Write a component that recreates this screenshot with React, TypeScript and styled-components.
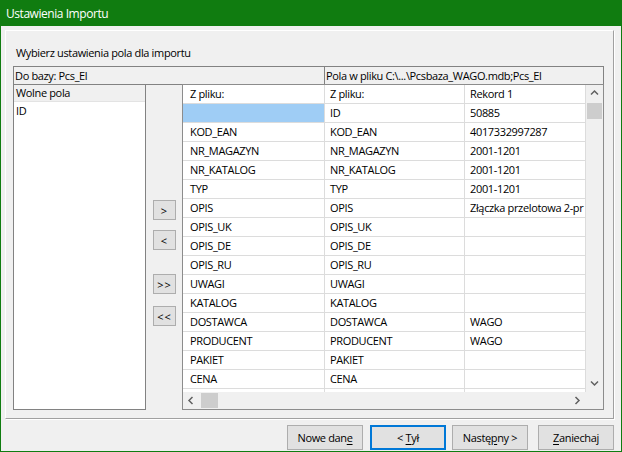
import React from 'react';
import styled, { createGlobalStyle } from 'styled-components';

const GlobalStyle = createGlobalStyle`
  html, body {
    margin: 0;
    padding: 0;
    background: #ffffff;
  }
`;

const Window = styled.div`
  width: 622px;
  height: 452px;
  box-sizing: border-box;
  background: #107c10;
  display: flex;
  flex-direction: column;
  font-family: 'Open Sans', 'Noto Sans', sans-serif;
  font-size: 11px;
  letter-spacing: -0.35px;
  color: #000;
`;

const TitleBar = styled.div`
  height: 26px;
  flex: none;
  display: flex;
  align-items: center;
  padding-left: 6px;
  color: #fff;
  font-size: 12px;
  letter-spacing: -0.45px;
`;

const Body = styled.div`
  flex: 1;
  margin: 0 1px 1px;
  background: #f0f0f0;
  display: flex;
  flex-direction: column;
`;

const Panel = styled.div`
  margin: 4px 0 0 4px;
  width: 609px;
  height: 389px;
  box-sizing: border-box;
  border: 1px solid;
  border-color: #ffffff #a0a0a0 #a0a0a0 #ffffff;
  box-shadow: 1px 1px 0 #ffffff;
  display: flex;
  flex-direction: column;
`;

const Caption = styled.div`
  margin-top: 14px;
  padding-left: 10px;
  line-height: 15px;
`;

const Frame = styled.div`
  flex: 1;
  margin: 6px 9px 8px 7px;
  display: flex;
  flex-direction: column;
`;

const HeaderBox = styled.div`
  height: 18px;
  box-sizing: border-box;
  border: 1px solid #828282;
  border-bottom: none;
  display: flex;
`;

const HeaderCell = styled.div<{ $width?: number }>`
  ${(p) => (p.$width ? `width: ${p.$width}px; border-right: 1px solid #828282;` : 'flex: 1;')}
  box-sizing: border-box;
  padding-left: 1px;
  line-height: 17px;
  white-space: nowrap;
  overflow: hidden;
`;

const LowerRow = styled.div`
  flex: 1;
  display: flex;
`;

const ListBox = styled.div`
  width: 133px;
  box-sizing: border-box;
  border: 1px solid #828282;
  background: #fff;
`;

const ListHeader = styled.div`
  height: 17px;
  box-sizing: border-box;
  background: #f0f0f0;
  border-bottom: 1px solid #e3e3e3;
  padding-left: 2px;
  line-height: 16px;
`;

const ListItem = styled.div`
  height: 17px;
  padding-left: 2px;
  line-height: 17px;
`;

const Strip = styled.div`
  width: 36px;
  box-sizing: border-box;
  border-top: 1px solid #828282;
  display: flex;
  flex-direction: column;
  padding: 115px 0 0 7px;
`;

const MoveButton = styled.div<{ $gap: number }>`
  width: 23px;
  height: 20px;
  box-sizing: border-box;
  margin-top: ${(p) => p.$gap}px;
  background: #e1e1e1;
  border: 1px solid #adadad;
  display: flex;
  align-items: center;
  justify-content: center;
  letter-spacing: 1px;
  font-size: 11px;
`;

const GridBox = styled.div`
  flex: 1;
  box-sizing: border-box;
  border: 1px solid #8c8c8c;
  background: #fff;
  display: flex;
  flex-direction: column;
  overflow: hidden;
`;

const GridTop = styled.div`
  height: 307px;
  display: flex;
`;

const Table = styled.div`
  width: 403px;
  overflow: hidden;
`;

const Row = styled.div`
  display: grid;
  grid-template-columns: 142px 140px 121px;
  height: 19px;
`;

const Cell = styled.div<{ $pad: number; $selected?: boolean }>`
  box-sizing: border-box;
  border-right: 1px solid #dcdcdc;
  border-bottom: 1px solid #dcdcdc;
  padding-left: ${(p) => p.$pad}px;
  line-height: 18px;
  white-space: nowrap;
  overflow: hidden;
  background: ${(p) => (p.$selected ? '#9fcdf5' : '#ffffff')};
`;

const VScroll = styled.div`
  width: 17px;
  background: #f0f0f0;
  display: flex;
  flex-direction: column;
`;

const ArrowBtn = styled.div<{ $end?: boolean }>`
  width: 17px;
  height: 17px;
  flex: none;
  display: flex;
  align-items: center;
  justify-content: center;
  ${(p) => (p.$end ? 'margin-top: auto;' : '')}
`;

const VThumb = styled.div`
  height: 16px;
  margin: 1px 1px 0;
  background: #cdcdcd;
`;

const HScrollRow = styled.div`
  height: 17px;
  display: flex;
  background: #f0f0f0;
`;

const HScroll = styled.div`
  width: 403px;
  display: flex;
`;

const HThumb = styled.div`
  width: 17px;
  height: 15px;
  margin: 1px 0 0 1px;
  background: #cdcdcd;
`;

const HSpacer = styled.div`
  flex: 1;
`;

const Footer = styled.div`
  display: flex;
  justify-content: flex-end;
  padding: 6px 7px 0 0;
`;

const DialogButton = styled.div<{ $gap: number; $focused?: boolean }>`
  width: 76px;
  height: 25px;
  box-sizing: border-box;
  margin-left: ${(p) => p.$gap}px;
  background: #e1e1e1;
  border: 1px solid ${(p) => (p.$focused ? '#0078d7' : '#adadad')};
  box-shadow: ${(p) => (p.$focused ? 'inset 0 0 0 1px #0078d7' : 'none')};
  display: flex;
  align-items: center;
  justify-content: center;
  white-space: pre;

  u {
    text-underline-offset: 2px;
  }
`;

type Dir = 'up' | 'down' | 'left' | 'right';

const chevronPoints: Record<Dir, string> = {
  up: '1,5.5 4.5,2 8,5.5',
  down: '1,2.5 4.5,6 8,2.5',
  left: '5.5,1 2,4.5 5.5,8',
  right: '2.5,1 6,4.5 2.5,8',
};

const Chevron = ({ dir }: { dir: Dir }) => (
  <svg width="9" height="9" viewBox="0 0 9 9">
    <polyline points={chevronPoints[dir]} fill="none" stroke="#606060" strokeWidth="1.5" />
  </svg>
);

const rows: [string, string, string][] = [
  ['', 'ID', '50885'],
  ['KOD_EAN', 'KOD_EAN', '4017332997287'],
  ['NR_MAGAZYN', 'NR_MAGAZYN', '2001-1201'],
  ['NR_KATALOG', 'NR_KATALOG', '2001-1201'],
  ['TYP', 'TYP', '2001-1201'],
  ['OPIS', 'OPIS', 'Złączka przelotowa 2-pr'],
  ['OPIS_UK', 'OPIS_UK', ''],
  ['OPIS_DE', 'OPIS_DE', ''],
  ['OPIS_RU', 'OPIS_RU', ''],
  ['UWAGI', 'UWAGI', ''],
  ['KATALOG', 'KATALOG', ''],
  ['DOSTAWCA', 'DOSTAWCA', 'WAGO'],
  ['PRODUCENT', 'PRODUCENT', 'WAGO'],
  ['PAKIET', 'PAKIET', ''],
  ['CENA', 'CENA', ''],
  ['', '', ''],
];

export default function App() {
  return (
    <>
      <GlobalStyle />
      <Window>
        <TitleBar>Ustawienia Importu</TitleBar>
        <Body>
          <Panel>
            <Caption>Wybierz ustawienia pola dla importu</Caption>
            <Frame>
              <HeaderBox>
                <HeaderCell $width={311}>Do bazy: Pcs_El</HeaderCell>
                <HeaderCell>Pola w pliku C:\...\Pcsbaza_WAGO.mdb;Pcs_El</HeaderCell>
              </HeaderBox>
              <LowerRow>
                <ListBox>
                  <ListHeader>Wolne pola</ListHeader>
                  <ListItem>ID</ListItem>
                </ListBox>
                <Strip>
                  <MoveButton $gap={0}>&gt;</MoveButton>
                  <MoveButton $gap={10}>&lt;</MoveButton>
                  <MoveButton $gap={24}>&gt;&gt;</MoveButton>
                  <MoveButton $gap={12}>&lt;&lt;</MoveButton>
                </Strip>
                <GridBox>
                  <GridTop>
                    <Table>
                      <Row>
                        <Cell $pad={7}>Z pliku:</Cell>
                        <Cell $pad={5}>Z pliku:</Cell>
                        <Cell $pad={5}>Rekord 1</Cell>
                      </Row>
                      {rows.map(([a, b, c], i) => (
                        <Row key={i}>
                          <Cell $pad={7} $selected={i === 0}>{a}</Cell>
                          <Cell $pad={5}>{b}</Cell>
                          <Cell $pad={5}>{c}</Cell>
                        </Row>
                      ))}
                    </Table>
                    <VScroll>
                      <ArrowBtn><Chevron dir="up" /></ArrowBtn>
                      <VThumb />
                      <ArrowBtn $end><Chevron dir="down" /></ArrowBtn>
                    </VScroll>
                  </GridTop>
                  <HScrollRow>
                    <HScroll>
                      <ArrowBtn><Chevron dir="left" /></ArrowBtn>
                      <HThumb />
                      <HSpacer />
                      <ArrowBtn><Chevron dir="right" /></ArrowBtn>
                    </HScroll>
                  </HScrollRow>
                </GridBox>
              </LowerRow>
            </Frame>
          </Panel>
          <Footer>
            <DialogButton $gap={0}><span>Nowe dan<u>e</u></span></DialogButton>
            <DialogButton $gap={7} $focused><span>&lt; <u>T</u>ył</span></DialogButton>
            <DialogButton $gap={6}><span>Nastę<u>p</u>ny &gt;</span></DialogButton>
            <DialogButton $gap={10}><span><u>Z</u>aniechaj</span></DialogButton>
          </Footer>
        </Body>
      </Window>
    </>
  );
}
